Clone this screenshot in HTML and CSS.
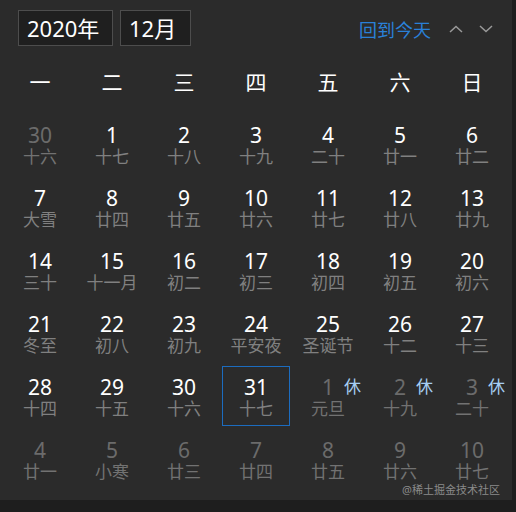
FILE: index.html
```html
<!DOCTYPE html>
<html lang="zh-CN">
<head>
    <meta charset="UTF-8">
    <meta name="viewport" content="width=device-width, initial-scale=1.0">
    <title>日历</title>
    <link rel="stylesheet" href="styles.css">
</head>
<body>
    <div class="calendar">
        <div class="toolbar">
            <div class="select year">2020年</div>
            <div class="select month">12月</div>
            <span class="today-link">回到今天</span>
            <span class="arrow">
                <svg width="14" height="8" viewBox="0 0 14 8"><polyline points="1,7 7,1.5 13,7" /></svg>
            </span>
            <span class="arrow">
                <svg width="14" height="8" viewBox="0 0 14 8"><polyline points="1,1 7,6.5 13,1" /></svg>
            </span>
        </div>

        <div class="weekdays">
            <span>一</span><span>二</span><span>三</span><span>四</span><span>五</span><span>六</span><span>日</span>
        </div>

        <div class="days" id="days"></div>

        <div class="watermark">@稀土掘金技术社区</div>
    </div>

    <script>
        // [日期, 农历/节日, 是否本月, 是否休息]
        const dias = [
            [30, '十六', 0], [1, '十七', 1], [2, '十八', 1], [3, '十九', 1], [4, '二十', 1], [5, '廿一', 1], [6, '廿二', 1],
            [7, '大雪', 1], [8, '廿四', 1], [9, '廿五', 1], [10, '廿六', 1], [11, '廿七', 1], [12, '廿八', 1], [13, '廿九', 1],
            [14, '三十', 1], [15, '十一月', 1], [16, '初二', 1], [17, '初三', 1], [18, '初四', 1], [19, '初五', 1], [20, '初六', 1],
            [21, '冬至', 1], [22, '初八', 1], [23, '初九', 1], [24, '平安夜', 1], [25, '圣诞节', 1], [26, '十二', 1], [27, '十三', 1],
            [28, '十四', 1], [29, '十五', 1], [30, '十六', 1], [31, '十七', 1], [1, '元旦', 0, 1], [2, '十九', 0, 1], [3, '二十', 0, 1],
            [4, '廿一', 0], [5, '小寒', 0], [6, '廿三', 0], [7, '廿四', 0], [8, '廿五', 0], [9, '廿六', 0], [10, '廿七', 0]
        ];

        const grid = document.getElementById('days');
        dias.forEach(function (d, i) {
            let cell = document.createElement('div');
            cell.className = 'day';
            if (!d[2]) cell.classList.add('other');
            if (i === 31) cell.classList.add('today');

            let num = document.createElement('span');
            num.className = 'num';
            num.textContent = d[0];
            cell.appendChild(num);

            let lunar = document.createElement('span');
            lunar.className = 'lunar';
            lunar.textContent = d[1];
            cell.appendChild(lunar);

            if (d[3]) {
                let rest = document.createElement('span');
                rest.className = 'rest';
                rest.textContent = '休';
                cell.appendChild(rest);
            }
            grid.appendChild(cell);
        });
    </script>
</body>
</html>
```

FILE: styles.css
```css
* {
    margin: 0;
    padding: 0;
    box-sizing: border-box;
}

body {
    background: #1e1e1e;
    font-family: 'Noto Sans', 'Noto Sans CJK SC', sans-serif;
    color: #fff;
}

/* painel do calendário */
.calendar {
    position: relative;
    width: 512px;
    height: 500px;
    background: #2b2b2b;
}

/* barra superior */
.toolbar {
    display: flex;
    align-items: center;
    padding: 10px 11px 0 18px;
    height: 46px;
}

.select {
    height: 36px;
    border: 1px solid #4d4d4d;
    background: #1f1f1f;
    font-size: 22px;
    line-height: 34px;
    padding-left: 8px;
}

.year {
    width: 95px;
}

.month {
    width: 71px;
    margin-left: 7px;
}

.today-link {
    margin-left: auto;
    margin-right: 10px;
    color: #2a80d8;
    font-size: 18px;
    padding-top: 2px;
}

.arrow {
    display: flex;
    width: 30px;
    justify-content: center;
    padding-top: 2px;
}

.arrow svg polyline {
    fill: none;
    stroke: #9a9a9a;
    stroke-width: 1.5;
}

/* dias da semana */
.weekdays {
    display: grid;
    grid-template-columns: repeat(7, 68px);
    column-gap: 4px;
    padding: 0 6px;
    margin-top: 16px;
    line-height: 40px;
    font-size: 21px;
    text-align: center;
}

/* grade de dias */
.days {
    display: grid;
    grid-template-columns: repeat(7, 68px);
    grid-template-rows: repeat(6, 60px);
    column-gap: 4px;
    row-gap: 3px;
    padding: 0 6px;
    margin-top: 12px;
}

.day {
    position: relative;
    display: flex;
    flex-direction: column;
    align-items: center;
    padding-top: 8px;
    border: 1px solid transparent;
}

.day .num {
    font-size: 21px;
    line-height: 24px;
    color: #fff;
}

.day .lunar {
    font-size: 17px;
    line-height: 20px;
    color: #808080;
    white-space: nowrap;
}

.day.other .num {
    color: #6b6b6b;
}

.day.other .lunar {
    color: #727272;
}

.day.today {
    border-color: #1c6cbf;
}

.day .rest {
    position: absolute;
    top: 8px;
    left: calc(50% + 16px);
    font-size: 17px;
    line-height: 24px;
    color: #a6cdf2;
}

.watermark {
    position: absolute;
    right: 12px;
    bottom: 3px;
    font-size: 11px;
    color: #8a8a8a;
}
```
